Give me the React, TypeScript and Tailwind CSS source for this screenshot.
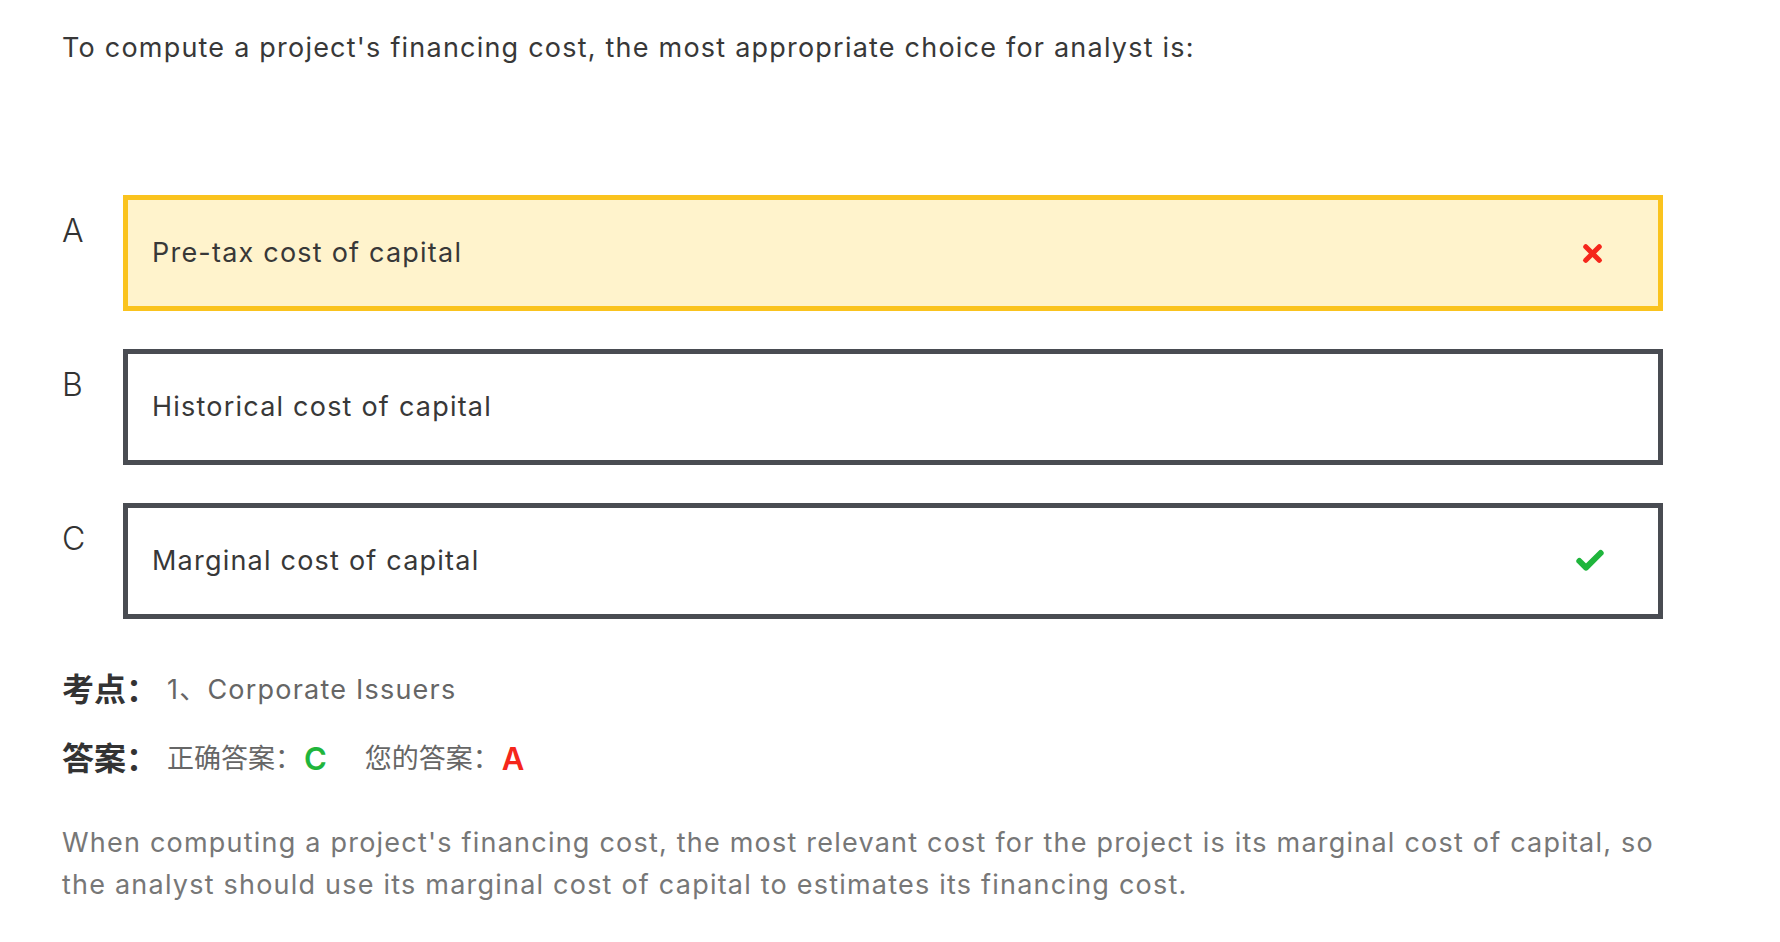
import { Check, X } from 'lucide-react';

const FONT = { fontFamily: 'Inter, "Noto Sans CJK SC", sans-serif' };

type Opt = { key: string; text: string; mark?: 'wrong' | 'right' };

const options: Opt[] = [
  { key: 'A', text: 'Pre-tax cost of capital', mark: 'wrong' },
  { key: 'B', text: 'Historical cost of capital' },
  { key: 'C', text: 'Marginal cost of capital', mark: 'right' },
];

function OptionRow({ opt }: { opt: Opt }) {
  const picked = opt.mark === 'wrong';
  return (
    <div className="flex">
      <div className="w-[61px] shrink-0 pt-[16px] text-[32px] font-light leading-[40px] text-[#333]">{opt.key}</div>
      <div
        className={
          picked
            ? 'flex h-[116px] flex-1 items-center justify-between border-[5px] border-[#fac31e] bg-[#fff3cc] pl-[24px] pr-[52px]'
            : 'flex h-[116px] flex-1 items-center justify-between border-[5px] border-[#494c52] bg-white pl-[24px] pr-[52px]'
        }
      >
        <span className="text-[27px] tracking-[0.045em] text-[#383838]">{opt.text}</span>
        {opt.mark === 'wrong' && <X className="h-[27px] w-[27px] text-[#f5261b]" strokeWidth={4.5} />}
        {opt.mark === 'right' && <Check className="h-[32px] w-[32px] text-[#1fb53c]" strokeWidth={4.5} />}
      </div>
    </div>
  );
}

export default function App() {
  return (
    <div className="min-h-screen bg-white pl-[62px] pt-[27px] pr-[117px]" style={FONT}>
      <p className="text-[27px] leading-[42px] tracking-[0.045em] text-[#383838]">
        To compute a project's financing cost, the most appropriate choice for analyst is:
      </p>

      <div className="mt-[126px] flex flex-col gap-[38px]">
        {options.map((o) => (
          <OptionRow key={o.key} opt={o} />
        ))}
      </div>

      <div className="mt-[50px] flex items-center leading-[42px]">
        <span className="w-[105px] shrink-0 text-[32px] font-bold text-[#333]">考点：</span>
        <span className="text-[27px] tracking-[0.045em] text-[#666]">1、Corporate Issuers</span>
      </div>

      <div className="mt-[27px] flex items-center leading-[42px]">
        <span className="w-[105px] shrink-0 text-[32px] font-bold text-[#333]">答案：</span>
        <span className="text-[27px] text-[#666]">正确答案：</span>
        <span className="ml-[2px] text-[31px] font-semibold text-[#1fb53c]">C</span>
        <span className="ml-[38px] text-[27px] text-[#666]">您的答案：</span>
        <span className="ml-[2px] text-[31px] font-semibold text-[#f5261b]">A</span>
      </div>

      <p className="mt-[42px] text-[27px] leading-[42px] tracking-[0.045em] text-[#777]">
        When computing a project's financing cost, the most relevant cost for the project is its marginal cost of capital, so
        the analyst should use its marginal cost of capital to estimates its financing cost.
      </p>
    </div>
  );
}
